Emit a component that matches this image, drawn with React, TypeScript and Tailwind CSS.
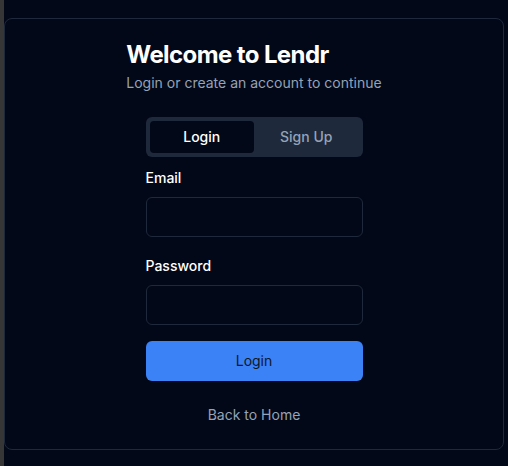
import { useState } from 'react';

export default function App() {
  const [tab, setTab] = useState<'login' | 'signup'>('login');

  return (
    <div
      className="flex h-[466px] w-[508px] overflow-hidden bg-[#020817] text-white"
      style={{ fontFamily: 'Inter, "Noto Sans", sans-serif' }}
    >
      {/* window edge */}
      <div className="w-1 shrink-0 bg-[#363636]" />

      <div className="flex-1 pt-[18px] pr-1">
        {/* card */}
        <div className="flex flex-col rounded-lg border border-[#1e293b] bg-[#020817] px-6 pt-6 pb-6">
          <div className="mx-auto w-fit">
            <h1 className="text-2xl leading-none font-bold tracking-tight">Welcome to Lendr</h1>
            <p className="mt-1.5 text-sm leading-5 text-[#94a3b8]">
              Login or create an account to continue
            </p>
          </div>

          <div className="mx-auto mt-6 w-[217px]">
            {/* tabs */}
            <div className="grid h-10 grid-cols-2 rounded-md bg-[#1e293b] p-1">
              <button
                onClick={() => setTab('login')}
                className={`rounded-sm text-sm font-medium ${
                  tab === 'login' ? 'bg-[#020817] text-white' : 'text-[#94a3b8]'
                }`}
              >
                Login
              </button>
              <button
                onClick={() => setTab('signup')}
                className={`rounded-sm text-sm font-medium ${
                  tab === 'signup' ? 'bg-[#020817] text-white' : 'text-[#94a3b8]'
                }`}
              >
                Sign Up
              </button>
            </div>

            {/* form */}
            <div className="mt-[11px]">
              <label className="block text-sm leading-5 font-medium">Email</label>
              <input
                type="email"
                className="mt-[9px] block h-10 w-full rounded-md border border-[#1e293b] bg-transparent px-3 text-sm outline-none"
              />
            </div>

            <div className="mt-[19px]">
              <label className="block text-sm leading-5 font-medium">Password</label>
              <input
                type="password"
                className="mt-[9px] block h-10 w-full rounded-md border border-[#1e293b] bg-transparent px-3 text-sm outline-none"
              />
            </div>

            <button className="mt-4 h-10 w-full rounded-md bg-[#3b82f6] text-sm text-[#0f172a]">
              Login
            </button>

            <div className="mt-6 text-center text-sm leading-5 text-[#94a3b8]">Back to Home</div>
          </div>
        </div>
      </div>
    </div>
  );
}
